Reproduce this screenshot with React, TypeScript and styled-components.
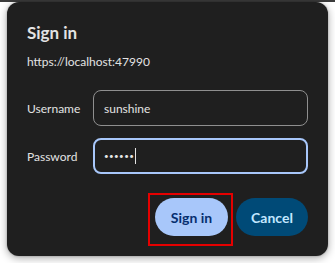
import React from "react";
import styled, { createGlobalStyle } from "styled-components";

const GlobalStyle = createGlobalStyle`
  html, body {
    margin: 0;
    padding: 0;
    background: #ffffff;
    font-family: Lato, "Noto Sans", sans-serif;
  }
`;

const Page = styled.div`
  width: 335px;
  height: 263px;
  background: #ffffff;
  overflow: hidden;
`;

const TopStrip = styled.div`
  height: 2px;
  background: #3b3b3b;
`;

const Dialog = styled.div`
  margin: 0 7px;
  width: 321px;
  box-sizing: border-box;
  padding: 20px;
  background: #1f1f1f;
  border-radius: 12px;
  box-shadow: 0 2px 8px rgba(0, 0, 0, 0.35), 0 0 2px rgba(0, 0, 0, 0.3);
  display: flex;
  flex-direction: column;
  color: #e3e3e3;
`;

const Title = styled.h2`
  margin: 0;
  font-size: 17px;
  line-height: 22px;
  font-weight: 700;
`;

const Origin = styled.div`
  margin-top: 9px;
  font-size: 12px;
  line-height: 18px;
`;

const Form = styled.div`
  margin-top: 19px;
  display: grid;
  grid-template-columns: 66px 215px;
  row-gap: 12px;
  align-items: center;
`;

const Label = styled.label`
  font-size: 12px;
  color: #e3e3e3;
`;

const Field = styled.div<{ $focused?: boolean }>`
  box-sizing: border-box;
  height: 36px;
  border-radius: 8px;
  border: ${(p) => (p.$focused ? "2px solid #a8c7fa" : "1px solid #8f8f8f")};
  padding-left: ${(p) => (p.$focused ? "9px" : "10px")};
  display: flex;
  align-items: center;
  font-size: 12px;
  color: #e3e3e3;
`;

const Dots = styled.span`
  font-size: 8px;
  letter-spacing: 0.4px;
`;

const Caret = styled.span`
  display: inline-block;
  width: 1px;
  height: 16px;
  margin-left: 1px;
  background: #e3e3e3;
`;

const Actions = styled.div`
  margin-top: 24px;
  display: flex;
  justify-content: flex-end;
  gap: 8px;
`;

const Highlight = styled.div`
  position: relative;
  display: flex;
`;

const RedBox = styled.div`
  position: absolute;
  left: -7px;
  right: -5px;
  top: -5px;
  bottom: -10px;
  border: 2px solid #e50000;
  pointer-events: none;
`;

const Button = styled.button<{ $primary?: boolean }>`
  height: 38px;
  width: ${(p) => (p.$primary ? "73px" : "72px")};
  border: none;
  border-radius: 19px;
  padding: 0;
  font-family: inherit;
  font-size: 14px;
  font-weight: 700;
  background: ${(p) => (p.$primary ? "#a8c7fa" : "#004a77")};
  color: ${(p) => (p.$primary ? "#062e6f" : "#c2e7ff")};
  cursor: pointer;
`;

export default function App() {
  return (
    <Page>
      <GlobalStyle />
      <TopStrip />
      <Dialog>
        <Title>Sign in</Title>
        <Origin>https://localhost:47990</Origin>
        <Form>
          <Label>Username</Label>
          <Field>sunshine</Field>
          <Label>Password</Label>
          <Field $focused>
            <Dots>••••••</Dots>
            <Caret />
          </Field>
        </Form>
        <Actions>
          <Highlight>
            <Button $primary>Sign in</Button>
            <RedBox />
          </Highlight>
          <Button>Cancel</Button>
        </Actions>
      </Dialog>
    </Page>
  );
}
